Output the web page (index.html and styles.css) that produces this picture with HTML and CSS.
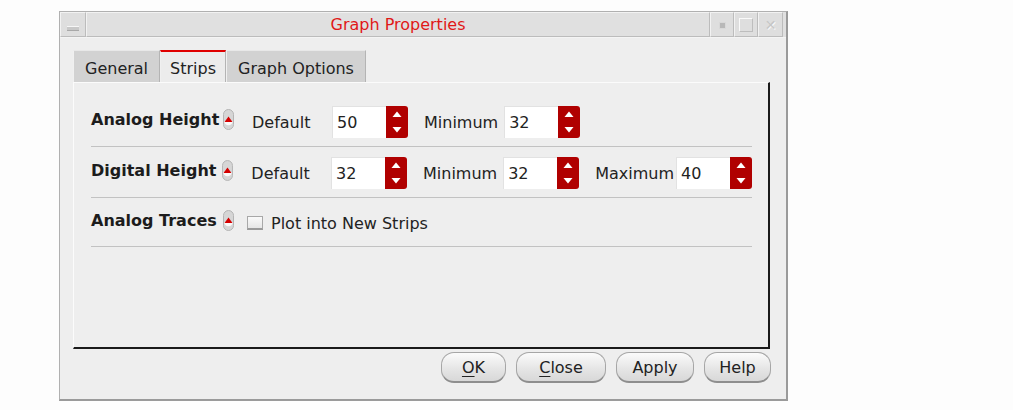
FILE: index.html
```html
<!DOCTYPE html>
<html>
<head>
<meta charset="utf-8">
<link rel="stylesheet" href="styles.css">
</head>
<body>
<div class="window">
  <div class="titlebar">
    <div class="tb-btn tb-menu"><span class="bar"></span></div>
    <div class="title">Graph Properties</div>
    <div class="tb-btn tb-min"><span class="dot"></span></div>
    <div class="tb-btn tb-max"><span class="sq"></span></div>
    <div class="tb-btn tb-close"><span class="x">✕</span></div>
  </div>
  <div class="body">
    <div class="tabs">
      <div class="tab">General</div>
      <div class="tab active">Strips</div>
      <div class="tab">Graph Options</div>
    </div>
    <div class="panel">
      <div class="row r1">
        <div class="name">Analog Height</div>
        <svg class="ind" width="11" height="21" viewBox="0 0 11 21"><rect x="0.5" y="0.5" width="10" height="20" rx="5" fill="#d6d6d6" stroke="#b4b4b4"/><path d="M1.2 12 A4.3 4.3 0 0 0 9.8 12 Z" fill="#fafafa"/><path d="M5.5 7.5 L9.5 13 L1.5 13 Z" fill="#d40000"/></svg>
        <div class="lbl ldef">Default</div>
        <div class="spin"><div class="val">50</div><svg class="arr" width="22" height="32" viewBox="0 0 22 32"><path d="M0 0 H19 Q22 0 22 3 V29 Q22 32 19 32 H0 Z" fill="#b00000"/><path d="M11 5.5 L15.5 11 L6.5 11 Z" fill="#fff"/><path d="M11 26.5 L15.5 21 L6.5 21 Z" fill="#fff"/></svg></div>
        <div class="lbl lmin">Minimum</div>
        <div class="spin"><div class="val">32</div><svg class="arr" width="22" height="32" viewBox="0 0 22 32"><path d="M0 0 H19 Q22 0 22 3 V29 Q22 32 19 32 H0 Z" fill="#b00000"/><path d="M11 5.5 L15.5 11 L6.5 11 Z" fill="#fff"/><path d="M11 26.5 L15.5 21 L6.5 21 Z" fill="#fff"/></svg></div>
      </div>
      <div class="row r2">
        <div class="name">Digital Height</div>
        <svg class="ind" width="11" height="21" viewBox="0 0 11 21"><rect x="0.5" y="0.5" width="10" height="20" rx="5" fill="#d6d6d6" stroke="#b4b4b4"/><path d="M1.2 12 A4.3 4.3 0 0 0 9.8 12 Z" fill="#fafafa"/><path d="M5.5 7.5 L9.5 13 L1.5 13 Z" fill="#d40000"/></svg>
        <div class="lbl ldef">Default</div>
        <div class="spin"><div class="val">32</div><svg class="arr" width="22" height="32" viewBox="0 0 22 32"><path d="M0 0 H19 Q22 0 22 3 V29 Q22 32 19 32 H0 Z" fill="#b00000"/><path d="M11 5.5 L15.5 11 L6.5 11 Z" fill="#fff"/><path d="M11 26.5 L15.5 21 L6.5 21 Z" fill="#fff"/></svg></div>
        <div class="lbl lmin">Minimum</div>
        <div class="spin"><div class="val">32</div><svg class="arr" width="22" height="32" viewBox="0 0 22 32"><path d="M0 0 H19 Q22 0 22 3 V29 Q22 32 19 32 H0 Z" fill="#b00000"/><path d="M11 5.5 L15.5 11 L6.5 11 Z" fill="#fff"/><path d="M11 26.5 L15.5 21 L6.5 21 Z" fill="#fff"/></svg></div>
        <div class="lbl lmax">Maximum</div>
        <div class="spin"><div class="val">40</div><svg class="arr" width="22" height="32" viewBox="0 0 22 32"><path d="M0 0 H19 Q22 0 22 3 V29 Q22 32 19 32 H0 Z" fill="#b00000"/><path d="M11 5.5 L15.5 11 L6.5 11 Z" fill="#fff"/><path d="M11 26.5 L15.5 21 L6.5 21 Z" fill="#fff"/></svg></div>
      </div>
      <div class="row r3">
        <div class="name">Analog Traces</div>
        <svg class="ind" width="11" height="21" viewBox="0 0 11 21"><rect x="0.5" y="0.5" width="10" height="20" rx="5" fill="#d6d6d6" stroke="#b4b4b4"/><path d="M1.2 12 A4.3 4.3 0 0 0 9.8 12 Z" fill="#fafafa"/><path d="M5.5 7.5 L9.5 13 L1.5 13 Z" fill="#d40000"/></svg>
        <div class="check"></div>
        <div class="lbl">Plot into New Strips</div>
      </div>
    </div>
    <div class="buttons">
      <div class="btn b-ok"><u>O</u>K</div>
      <div class="btn b-close"><u>C</u>lose</div>
      <div class="btn b-apply">Apply</div>
      <div class="btn b-help">Help</div>
    </div>
  </div>
</div>
</body>
</html>
```

FILE: styles.css
```css
html, body {
  margin: 0;
  padding: 0;
  background: #fdfdfd;
}
body {
  font-family: "DejaVu Sans", sans-serif;
  font-size: 16px;
  color: #222;
}
.window {
  margin: 11px 0 0 59px;
  width: 729px;
  height: 390px;
  box-sizing: border-box;
  border-left: 1px solid #b0b0b0;
  border-top: 1px solid #b0b0b0;
  border-right: 2px solid #9a9a9a;
  border-bottom: 2px solid #9a9a9a;
  background: #eeeeee;
  display: flex;
  flex-direction: column;
}
.titlebar {
  height: 25px;
  display: flex;
  background: #e0e0e0;
  border-bottom: 1px solid #f4f4f4;
}
.tb-btn {
  width: 24px;
  height: 25px;
  box-sizing: border-box;
  border: 1px solid #f2f2f2;
  border-right-color: #bcbcbc;
  border-bottom-color: #bcbcbc;
  background: #dedede;
  display: flex;
  align-items: center;
  justify-content: center;
}
.tb-menu {
  width: 26px;
}
.tb-menu .bar {
  width: 12px;
  height: 3px;
  margin-top: 8px;
  background: #c8c8c8;
  border-top: 1px solid #f6f6f6;
  border-bottom: 1px solid #a8a8a8;
}
.title {
  flex: 1;
  text-align: center;
  color: #e01818;
  line-height: 24px;
  font-size: 16px;
  border: 1px solid #f2f2f2;
  border-right-color: #bcbcbc;
  border-bottom-color: #bcbcbc;
}
.tb-min .dot {
  width: 5px;
  height: 5px;
  background: #b8b8b8;
  border: 1px solid #d8d8d8;
  margin-top: 2px;
}
.tb-max .sq {
  width: 12px;
  height: 12px;
  border: 1px solid #bdbdbd;
  border-top-color: #fafafa;
  border-left-color: #fafafa;
}
.tb-close {
  width: 25px;
  margin-right: 3px;
}
.tb-close .x {
  color: #c6c6c6;
  font-size: 14px;
  text-shadow: 1px 1px 0 #f8f8f8;
}
.body {
  flex: 1;
  padding: 12px 16px 0 13px;
  display: flex;
  flex-direction: column;
}
.tabs {
  display: flex;
  height: 32px;
}
.tab {
  padding: 0 11px;
  line-height: 36px;
  background: #d2d2d2;
  border-left: 1px solid #f0f0f0;
  border-top: 1px solid #e8e8e8;
  border-right: 1px solid #b4b4b4;
  color: #222;
}
.tab.active {
  background: #ececec;
  border-top: 2px solid #e00000;
  line-height: 34px;
  padding: 0 9px;
}
.panel {
  height: 267px;
  box-sizing: border-box;
  border-left: 1px solid #fbfbfb;
  border-top: 1px solid #fbfbfb;
  border-right: 2px solid #1a1a1a;
  border-bottom: 2px solid #1a1a1a;
  background: #eeeeee;
  padding: 23px 16px 0 17px;
}
.row {
  display: flex;
  align-items: center;
  height: 32px;
  padding-bottom: 8px;
  border-bottom: 1px solid #c2c2c2;
}
.row.r2, .row.r3 {
  margin-top: 10px;
}
.row.r3 {
  height: 30px;
}
.name {
  width: 132px;
  font-weight: bold;
  color: #1c1c1c;
  position: relative;
  top: -3px;
}
.ind {
  position: relative;
  top: -3px;
}
.lbl {
  color: #222;
}
.ldef {
  margin-left: 18px;
  width: 80px;
}
.lmin {
  margin-left: 16px;
  margin-right: 6px;
}
.lmax {
  margin-left: 16px;
  margin-right: 2px;
}
.spin {
  display: flex;
  height: 32px;
}
.val {
  width: 54px;
  height: 32px;
  box-sizing: border-box;
  background: #fff;
  border-top: 1px solid #e2e2e2;
  border-left: 1px solid #e2e2e2;
  padding-left: 4px;
  line-height: 31px;
  color: #222;
}
.arr {
  display: block;
}
.check {
  width: 16px;
  height: 14px;
  box-sizing: border-box;
  margin-left: 13px;
  margin-right: 8px;
  border: 1px solid #a8a8a8;
  border-bottom: 2px solid #9a9a9a;
  background: linear-gradient(#fafafa, #e6e6e6);
}
.buttons {
  display: flex;
  justify-content: flex-end;
  margin-top: 3px;
  margin-right: -1px;
  gap: 10px;
}
.btn {
  height: 31px;
  box-sizing: border-box;
  border: 1px solid #a6a6a6;
  border-bottom: 2px solid #8e8e8e;
  border-radius: 13px;
  background: linear-gradient(#fbfbfb, #e4e4e4 60%, #d8d8d8);
  line-height: 30px;
  text-align: center;
  color: #222;
}
.btn u {
  text-decoration-thickness: 1px;
  text-underline-offset: 3px;
}
.b-ok { width: 65px; }
.b-close { width: 90px; }
.b-apply { width: 78px; }
.b-help { width: 67px; }
```
